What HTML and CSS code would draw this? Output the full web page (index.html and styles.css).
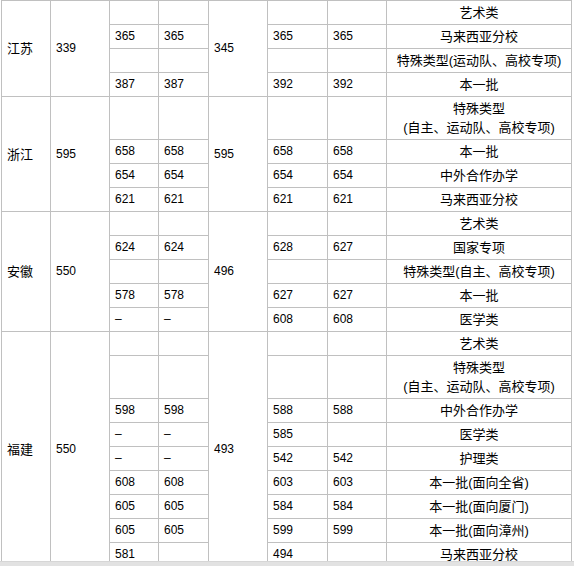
FILE: index.html
```html
<!DOCTYPE html>
<html lang="zh">
<head>
<meta charset="utf-8">
<title>录取分数</title>
<link rel="stylesheet" href="styles.css">
</head>
<body>
<table class="scores">
  <colgroup>
    <col class="c1"><col class="c2"><col class="c3"><col class="c4"><col class="c5"><col class="c6"><col class="c7"><col class="c8">
  </colgroup>
  <tbody>
    <!-- 江苏 -->
    <tr>
      <td rowspan="4" class="zh">江苏</td>
      <td rowspan="4">339</td>
      <td></td><td></td>
      <td rowspan="4">345</td>
      <td></td><td></td>
      <td class="type">艺术类</td>
    </tr>
    <tr><td>365</td><td>365</td><td>365</td><td>365</td><td class="type">马来西亚分校</td></tr>
    <tr><td></td><td></td><td></td><td></td><td class="type">特殊类型(运动队、高校专项)</td></tr>
    <tr><td>387</td><td>387</td><td>392</td><td>392</td><td class="type">本一批</td></tr>

    <!-- 浙江 -->
    <tr class="tall">
      <td rowspan="4" class="zh">浙江</td>
      <td rowspan="4">595</td>
      <td></td><td></td>
      <td rowspan="4">595</td>
      <td></td><td></td>
      <td class="type two">特殊类型<br>(自主、运动队、高校专项)</td>
    </tr>
    <tr><td>658</td><td>658</td><td>658</td><td>658</td><td class="type">本一批</td></tr>
    <tr><td>654</td><td>654</td><td>654</td><td>654</td><td class="type">中外合作办学</td></tr>
    <tr><td>621</td><td>621</td><td>621</td><td>621</td><td class="type">马来西亚分校</td></tr>

    <!-- 安徽 -->
    <tr>
      <td rowspan="5" class="zh">安徽</td>
      <td rowspan="5">550</td>
      <td></td><td></td>
      <td rowspan="5">496</td>
      <td></td><td></td>
      <td class="type">艺术类</td>
    </tr>
    <tr><td>624</td><td>624</td><td>628</td><td>627</td><td class="type">国家专项</td></tr>
    <tr><td></td><td></td><td></td><td></td><td class="type">特殊类型(自主、高校专项)</td></tr>
    <tr><td>578</td><td>578</td><td>627</td><td>627</td><td class="type">本一批</td></tr>
    <tr><td>–</td><td>–</td><td>608</td><td>608</td><td class="type">医学类</td></tr>

    <!-- 福建 -->
    <tr>
      <td rowspan="9" class="zh">福建</td>
      <td rowspan="9">550</td>
      <td></td><td></td>
      <td rowspan="9">493</td>
      <td></td><td></td>
      <td class="type">艺术类</td>
    </tr>
    <tr class="tall"><td></td><td></td><td></td><td></td><td class="type two">特殊类型<br>(自主、运动队、高校专项)</td></tr>
    <tr><td>598</td><td>598</td><td>588</td><td>588</td><td class="type">中外合作办学</td></tr>
    <tr><td>–</td><td>–</td><td>585</td><td></td><td class="type">医学类</td></tr>
    <tr><td>–</td><td>–</td><td>542</td><td>542</td><td class="type">护理类</td></tr>
    <tr><td>608</td><td>608</td><td>603</td><td>603</td><td class="type">本一批(面向全省)</td></tr>
    <tr><td>605</td><td>605</td><td>584</td><td>584</td><td class="type">本一批(面向厦门)</td></tr>
    <tr><td>605</td><td>605</td><td>599</td><td>599</td><td class="type">本一批(面向漳州)</td></tr>
    <tr><td>581</td><td></td><td>494</td><td></td><td class="type">马来西亚分校</td></tr>
  </tbody>
</table>
<div class="hbar"></div>
</body>
</html>
```

FILE: styles.css
```css
html, body {
  margin: 0;
  padding: 0;
  background: #ffffff;
  overflow: hidden;
}
body {
  padding-left: 1px;
}
.scores {
  border-collapse: collapse;
  table-layout: fixed;
  width: 570px;
  font-family: "Liberation Sans", "Noto Sans CJK SC", sans-serif;
  font-size: 12px;
  color: #000;
}
.c1 { width: 49px; }
.c2 { width: 59px; }
.c3 { width: 49px; }
.c4 { width: 50px; }
.c5 { width: 59px; }
.c6 { width: 60px; }
.c7 { width: 59px; }
.c8 { width: 185px; }
.scores tr { height: 24px; }
.scores tr.tall { height: 43px; }
.scores td {
  border: 1px solid #c0c0c0;
  padding: 0 0 0 5px;
  vertical-align: middle;
  line-height: 15px;
  white-space: nowrap;
  overflow: hidden;
}
.scores td.zh {
  font-size: 13px;
}
.scores td.type {
  text-align: center;
  font-size: 13px;
  padding: 0;
}
.scores td.two {
  line-height: 19px;
}
.hbar {
  position: fixed;
  left: 0;
  right: 0;
  bottom: 0;
  height: 4px;
  background: #e2e2e2;
  border-top: 1px solid #d6d6d6;
}
```
